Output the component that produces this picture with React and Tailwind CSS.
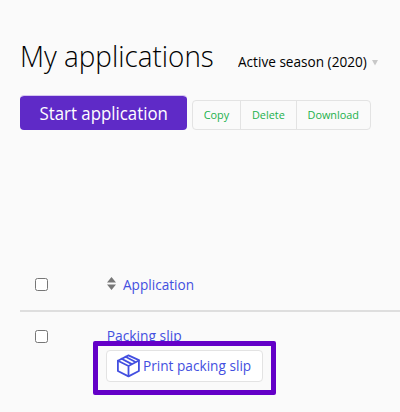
function BoxIcon() {
  return (
    <svg className="h-6 w-6 shrink-0 overflow-visible" viewBox="0 0 24 24" fill="none" stroke="#434fe0" strokeWidth="1.8" strokeLinejoin="round" strokeLinecap="round">
      <path d="M12.5 1.4 22.9 6.1V17L12.5 22.4 1.9 17V6.7Z" />
      <path d="M1.9 6.7 12.5 12 22.9 6.5M12.5 12V22" />
      <path d="M9.6 2.8 19 7.8M5.6 4.7 15.4 9.9" />
    </svg>
  );
}

function Checkbox() {
  return <span className="block h-[13px] w-[13px] shrink-0 rounded-[2.5px] border border-[#767676] bg-white" />;
}

const actions = [
  { label: "Copy", width: "w-[47px]" },
  { label: "Delete", width: "w-[56px] border-l" },
  { label: "Download", width: "w-[74px] border-l" },
];

export default function App() {
  return (
    <main className="h-[412px] w-[400px] overflow-hidden bg-[#fafafa] pl-5 font-['Open_Sans','Noto_Sans',sans-serif] whitespace-nowrap">
      <header className="flex items-baseline pt-[35px]">
        <h1 className="w-[218px] origin-left scale-x-[0.928] text-[30px] leading-[42px] font-light text-black">My applications</h1>
        <span className="w-[129px] origin-left scale-x-[0.972] text-[14px] text-black">Active season (2020)</span>
        <svg className="ml-[5px] h-[6px] w-[6px] -translate-y-px" viewBox="0 0 6 6">
          <path d="M0 0h6L3 5.5z" fill="#c8c8c8" />
        </svg>
      </header>
      <div className="mt-[18px] flex items-end">
        <button className="h-[35px] w-[167px] rounded-[4px] border-t border-[#d5c6f0] bg-[#5f2ac7] bg-clip-padding text-[18px] leading-[34px] text-white">
          <span className="inline-block scale-x-[0.935]">Start application</span>
        </button>
        <div className="ml-[5px] flex h-[30px] rounded-[4px] border border-[#e3e3e3]">
          {actions.map((a) => (
            <button key={a.label} className={`${a.width} border-[#e3e3e3] text-[11.5px] text-[#22b14c]`}>
              <span className="inline-block scale-x-[0.945]">{a.label}</span>
            </button>
          ))}
        </div>
      </div>
      <div className="mt-[128px] flex h-[54px] items-center border-b-2 border-[#dedede] pl-[15px]">
        <Checkbox />
        <svg className="ml-[59px] h-[13px] w-[9px] -translate-y-px" viewBox="0 0 9 13">
          <path d="M4.5 0 9 5.5H0zM0 7.5h9L4.5 13z" fill="#777" />
        </svg>
        <span className="ml-[7px] origin-left scale-x-[0.972] text-[14px] text-[#434fe0]">Application</span>
      </div>
      <div className="flex pt-[18px] pl-[15px]">
        <Checkbox />
        <div className="ml-[45px]">
          <div className="h-[11px] origin-left scale-x-[0.985] pl-[14px] text-[14px] leading-[12px] text-[#434fe0]">Packing slip</div>
          <div className="relative h-[54px] w-[183px] rounded-[2px] border-[5px] border-[#6400c8] bg-[#fafafa] pt-1 pl-2">
            <button className="flex h-8 w-[157px] items-center rounded-[4px] border border-[#e3e3e3] bg-white pl-[9px] text-[14px] text-[#434fe0]">
              <BoxIcon />
              <span className="ml-[3px] origin-left -translate-y-px scale-x-[0.975]">Print packing slip</span>
            </button>
          </div>
        </div>
      </div>
    </main>
  );
}
